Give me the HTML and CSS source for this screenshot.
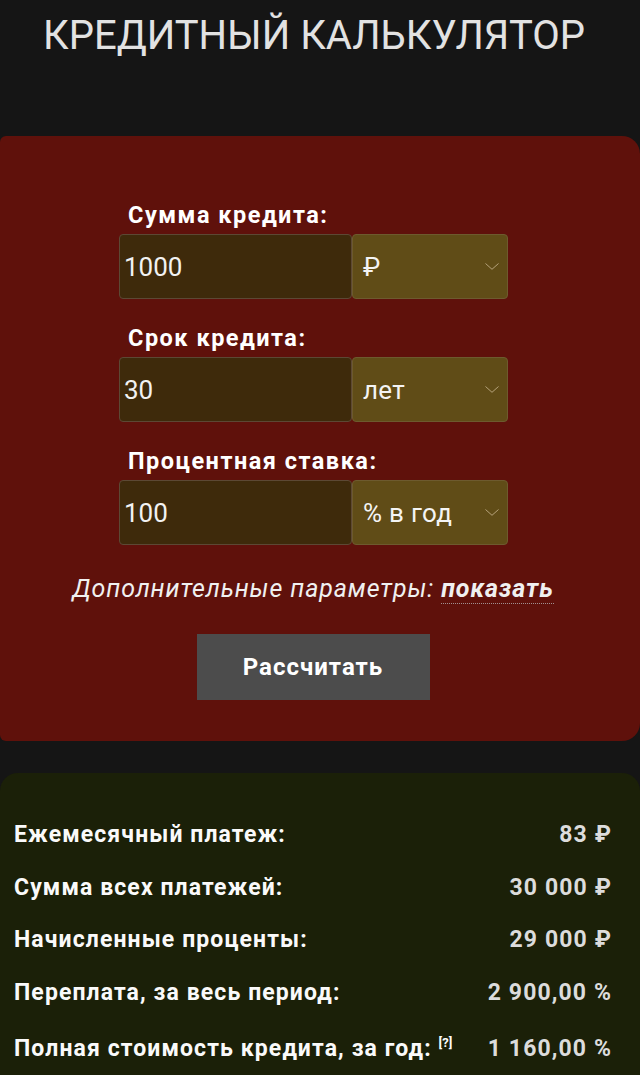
FILE: index.html
```html
<!DOCTYPE html>
<html lang="ru">
<head>
<meta charset="utf-8">
<title>Кредитный калькулятор</title>
<link rel="stylesheet" href="styles.css">
</head>
<body>
<h1 class="title">КРЕДИТНЫЙ КАЛЬКУЛЯТОР</h1>

<section class="calc">
  <div class="form">
    <div class="group">
      <div class="label">Сумма кредита:</div>
      <div class="fields">
        <div class="input">1000</div>
        <div class="select"><span>₽</span><svg class="chev" viewBox="0 0 14 7" width="14" height="7"><path d="M0.5 0.5 L7 6.3 L13.5 0.5" fill="none" stroke="#b5a27a" stroke-width="1"/></svg></div>
      </div>
    </div>
    <div class="group">
      <div class="label">Срок кредита:</div>
      <div class="fields">
        <div class="input">30</div>
        <div class="select"><span>лет</span><svg class="chev" viewBox="0 0 14 7" width="14" height="7"><path d="M0.5 0.5 L7 6.3 L13.5 0.5" fill="none" stroke="#b5a27a" stroke-width="1"/></svg></div>
      </div>
    </div>
    <div class="group">
      <div class="label">Процентная ставка:</div>
      <div class="fields">
        <div class="input">100</div>
        <div class="select"><span>% в год</span><svg class="chev" viewBox="0 0 14 7" width="14" height="7"><path d="M0.5 0.5 L7 6.3 L13.5 0.5" fill="none" stroke="#b5a27a" stroke-width="1"/></svg></div>
      </div>
    </div>
  </div>
  <p class="extra">Дополнительные параметры: <span class="show">показать</span></p>
  <div class="btn-wrap"><div class="btn">Рассчитать</div></div>
</section>

<section class="results">
  <div class="row"><span class="name">Ежемесячный платеж:</span><span class="val">83 ₽</span></div>
  <div class="row"><span class="name">Сумма всех платежей:</span><span class="val">30 000 ₽</span></div>
  <div class="row"><span class="name">Начисленные проценты:</span><span class="val">29 000 ₽</span></div>
  <div class="row"><span class="name">Переплата, за весь период:</span><span class="val">2 900,00 %</span></div>
  <div class="row last"><span class="name">Полная стоимость кредита, за год: <sup class="q">[?]</sup></span><span class="val">1 160,00 %</span></div>
</section>
</body>
</html>
```

FILE: styles.css
```css
html, body {
  margin: 0;
  padding: 0;
}
body {
  background: #151515;
  font-family: Roboto, "Liberation Sans", sans-serif;
  color: #fff;
  overflow: hidden;
}
.title {
  margin: 0;
  padding: 11px 12px 0 0;
  line-height: 50px;
  height: 50px;
  font-size: 40px;
  font-weight: 400;
  color: #e2e2e2;
  text-align: center;
  white-space: nowrap;
}
.calc {
  margin-top: 75px;
  background: #5f110b;
  border-radius: 6px 18px 18px 6px;
  padding: 66px 14px 41px 0;
}
.form {
  margin-left: 119px;
  width: 389px;
}
.group {
  margin-bottom: 26px;
}
.label {
  font-size: 23.5px;
  font-weight: 700;
  letter-spacing: 1.5px;
  line-height: 26px;
  padding-left: 9px;
  margin-bottom: 6px;
  white-space: nowrap;
}
.fields {
  display: flex;
  height: 65px;
}
.input {
  box-sizing: border-box;
  width: 233px;
  height: 65px;
  background: #3e2a0b;
  border: 1px solid #5c4834;
  border-radius: 4px;
  display: flex;
  align-items: center;
  padding-left: 4px;
  font-size: 26px;
  color: #f2f2f2;
}
.select {
  box-sizing: border-box;
  width: 156px;
  height: 65px;
  background: #604c17;
  border: 1px solid #6d5a2e;
  border-radius: 4px;
  display: flex;
  align-items: center;
  justify-content: space-between;
  padding: 0 8px 0 10px;
  font-size: 26px;
  letter-spacing: 0.3px;
  color: #f4f4f4;
}
.chev {
  display: block;
}
.extra {
  margin: 0;
  text-align: center;
  font-size: 25px;
  letter-spacing: 0.9px;
  font-style: italic;
  line-height: 30px;
  padding-top: 3px;
  color: #f0f0f0;
  white-space: nowrap;
}
.show {
  font-weight: 700;
  border-bottom: 1px dotted #a09090;
}
.btn-wrap {
  display: flex;
  justify-content: center;
  margin-top: 30px;
}
.btn {
  width: 233px;
  height: 66px;
  background: #4c4c4c;
  display: flex;
  align-items: center;
  justify-content: center;
  font-size: 24px;
  letter-spacing: 1px;
  font-weight: 700;
  color: #fff;
}
.results {
  margin-top: 32px;
  background: #1b2008;
  border-radius: 18px 18px 0 0;
  padding: 36px 28px 20px 14px;
}
.row {
  display: flex;
  justify-content: space-between;
  align-items: baseline;
  height: 52.5px;
  line-height: 52px;
  font-size: 23px;
  letter-spacing: 1.1px;
  font-weight: 700;
  white-space: nowrap;
}
.row.last {
  margin-top: 4px;
}
.name {
  color: #fafafa;
}
.val {
  color: #dcdcdc;
}
.q {
  font-size: 13px;
  letter-spacing: 0;
  line-height: 0;
  vertical-align: 9px;
}
```
